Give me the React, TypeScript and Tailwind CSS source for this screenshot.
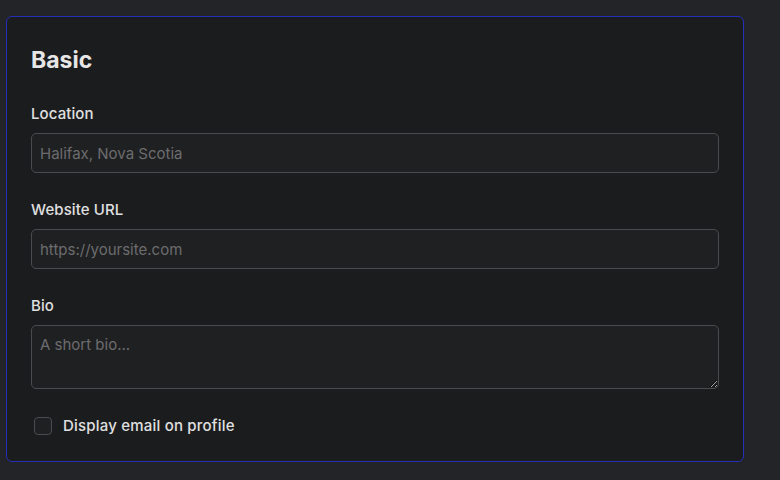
import React from "react";

export default function App() {
  const font = { fontFamily: "Inter, 'Noto Sans', sans-serif" };
  return (
    <div className="w-[780px] h-[480px] bg-[#232427] pt-[16px] pl-[6px] [color-scheme:dark]" style={font}>
      <div className="w-[738px] h-[446px] rounded-[6px] border border-[#2430b8] bg-[#1b1c1e] px-6 pt-6 pb-6">
        <h2 className="text-[23px] leading-[38px] font-bold text-[#e6e6e6] mb-[23px]">Basic</h2>
        <div className="flex flex-col gap-[25px]">
          <div>
            <label className="block text-[15px] leading-6 font-medium tracking-[0.1px] text-[#e0e0e0] mb-[7px]">Location</label>
            <input
              placeholder="Halifax, Nova Scotia"
              className="block w-full h-10 rounded-[5px] border border-[#4a4b4e] bg-[#1f2022] px-2 text-[15px] text-[#e0e0e0] placeholder:text-[#6c6c6e] outline-none"
              style={font}
            />
          </div>
          <div>
            <label className="block text-[15px] leading-6 font-medium tracking-[0.1px] text-[#e0e0e0] mb-[7px]">Website URL</label>
            <input
              placeholder="https://yoursite.com"
              className="block w-full h-10 rounded-[5px] border border-[#4a4b4e] bg-[#1f2022] px-2 text-[15px] text-[#e0e0e0] placeholder:text-[#6c6c6e] outline-none"
              style={font}
            />
          </div>
          <div>
            <label className="block text-[15px] leading-6 font-medium tracking-[0.1px] text-[#e0e0e0] mb-[7px]">Bio</label>
            <textarea
              placeholder="A short bio..."
              className="block w-full h-16 rounded-[5px] border border-[#4a4b4e] bg-[#1f2022] px-2 py-[8px] text-[15px] leading-[22px] text-[#e0e0e0] placeholder:text-[#6c6c6e] outline-none"
              style={font}
            />
          </div>
          <div className="flex items-center h-6">
            <span className="ml-[3px] w-[18px] h-[18px] rounded-[4px] border border-[#4a4b4e] bg-[#1f2022]" />
            <span className="ml-[11px] text-[15px] font-medium tracking-[0.2px] text-[#e0e0e0]">Display email on profile</span>
          </div>
        </div>
      </div>
    </div>
  );
}
